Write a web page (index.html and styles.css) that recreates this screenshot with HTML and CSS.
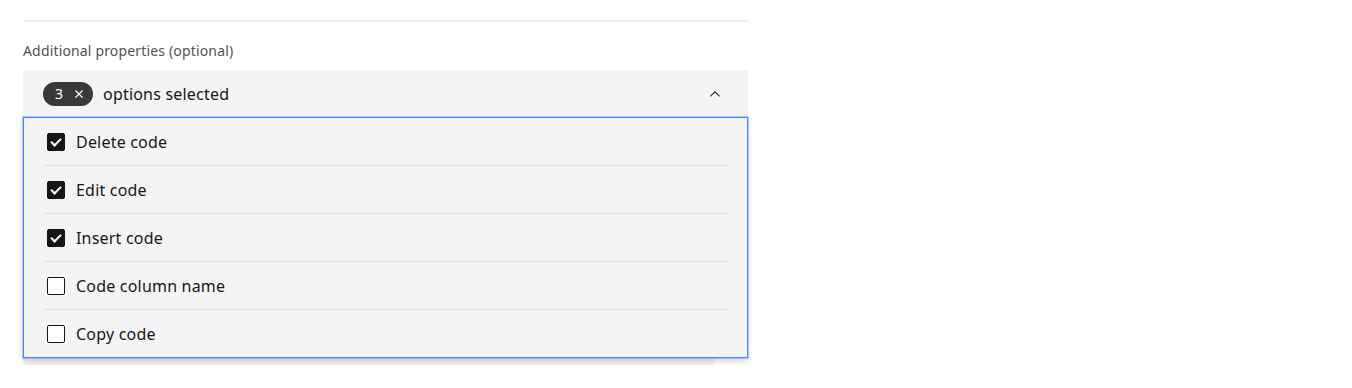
FILE: index.html
```html
<!DOCTYPE html>
<html lang="en">
  <head>
    <meta charset="UTF-8" />
    <meta name="viewport" content="width=device-width, initial-scale=1.0" />
    <title>Multiselect</title>
    <link rel="stylesheet" href="styles.css">
  </head>

  <body>
    <div class="form">
      <div class="divider"></div>

      <div class="fieldLabel">Additional properties (optional)</div>

      <div class="multiselect">
        <div class="field">
          <span class="tag">
            3
            <svg class="tagClose" width="16" height="16" viewBox="0 0 16 16">
              <path d="M4.5 4.5l7 7M11.5 4.5l-7 7" stroke="#fff" stroke-width="1.2" fill="none" />
            </svg>
          </span>
          <span class="fieldText">options selected</span>
          <svg class="chevron" width="16" height="16" viewBox="0 0 16 16">
            <path d="M8 5L13 10 12.3 10.7 8 6.4 3.7 10.7 3 10z" fill="#161616" />
          </svg>
        </div>

        <div class="menu">
          <div class="option"><span class="box checked"></span>Delete code</div>
          <div class="option"><span class="box checked"></span>Edit code</div>
          <div class="option"><span class="box checked"></span>Insert code</div>
          <div class="option"><span class="box"></span>Code column name</div>
          <div class="option"><span class="box"></span>Copy code</div>
        </div>
      </div>

      <div class="nextField"></div>
    </div>
  </body>
</html>
```

FILE: styles.css
```css
body {
  margin: 0;
  background: #fff;
  font-family: "Noto Sans", "IBM Plex Sans", sans-serif;
  color: #161616;
}

.form {
  width: 725px;
  margin-left: 23px;
  padding-top: 20px;
}

.divider {
  height: 2px;
  background-color: #f0f0f0;
}

.fieldLabel {
  margin-top: 19px;
  height: 29px;
  font-size: 14px;
  color: #525252;
  letter-spacing: 0.16px;
}

.multiselect {
  position: relative;
}

.field {
  display: flex;
  align-items: center;
  height: 47px;
  padding: 0 25px 0 20px;
  background-color: #f4f4f4;
}

.tag {
  display: flex;
  align-items: center;
  height: 24px;
  padding: 0 6px 0 12px;
  border-radius: 12px;
  background-color: #393939;
  color: #fff;
  font-size: 14px;
}

.tagClose {
  margin-left: 8px;
}

.fieldText {
  margin-left: 10px;
  font-size: 16px;
  letter-spacing: 0.2px;
}

.chevron {
  margin-left: auto;
}

.menu {
  position: absolute;
  top: 100%;
  left: 0;
  right: 0;
  z-index: 2;
  background-color: #f4f4f4;
  border: 1px solid #4589ff;
  box-shadow: 0 0 0 1px rgba(69, 137, 255, 0.35), 0 3px 6px rgba(0, 0, 0, 0.18);
}

.option {
  display: flex;
  align-items: center;
  height: 47px;
  margin: 0 18px 0 20px;
  border-top: 1px solid #e0e0e0;
  font-size: 16px;
  letter-spacing: 0.2px;
}

.option:first-child {
  height: 46px;
  border-top-color: transparent;
}

.option:last-child {
  height: 47px;
}

.box {
  width: 16px;
  height: 16px;
  margin: 0 11px 0 3px;
  border: 1px solid #161616;
  border-radius: 2px;
  background-color: #fff;
  position: relative;
}

.box.checked {
  background-color: #161616;
}

.box.checked::after {
  content: "";
  position: absolute;
  left: 5px;
  top: 2px;
  width: 4px;
  height: 8px;
  border-right: 2px solid #fff;
  border-bottom: 2px solid #fff;
  transform: rotate(45deg);
}

.nextField {
  width: 692px;
  height: 230px;
  margin-top: 18px;
  background-color: #f4f4f4;
}
```
